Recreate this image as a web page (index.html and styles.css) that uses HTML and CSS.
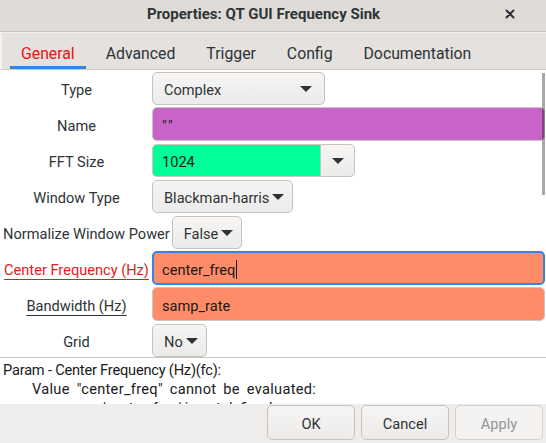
FILE: index.html
```html
<!DOCTYPE html>
<html>
<head>
<meta charset="utf-8">
<link rel="stylesheet" href="styles.css">
</head>
<body>
<div class="window">
  <div class="titlebar">
    <span class="title">Properties: QT GUI Frequency Sink</span>
    <span class="close">
      <svg width="10" height="10" viewBox="0 0 10 10"><path d="M1.5 1.5 L8.5 8.5 M8.5 1.5 L1.5 8.5" stroke="#2e3436" stroke-width="2" stroke-linecap="round"/></svg>
    </span>
  </div>
  <div class="tabbar">
    <div class="tab active">General</div>
    <div class="tab">Advanced</div>
    <div class="tab">Trigger</div>
    <div class="tab">Config</div>
    <div class="tab">Documentation</div>
  </div>
  <div class="content">
    <div class="row">
      <div class="label">Type</div>
      <div class="combo w-type"><span class="t">Complex</span><i class="arrow"></i></div>
    </div>
    <div class="row">
      <div class="label">Name</div>
      <div class="entry purple"><span class="t q">""</span></div>
    </div>
    <div class="row">
      <div class="label">FFT Size</div>
      <div class="entry-combo">
        <div class="entry green"><span class="t">1024</span></div>
        <div class="combo-btn"><i class="arrow"></i></div>
      </div>
    </div>
    <div class="row">
      <div class="label">Window Type</div>
      <div class="combo tight"><span class="t">Blackman-harris</span><i class="arrow"></i></div>
    </div>
    <div class="row">
      <div class="label">Normalize Window Power</div>
      <div class="combo tight"><span class="t">False</span><i class="arrow"></i></div>
    </div>
    <div class="row">
      <div class="label err">Center Frequency (Hz)</div>
      <div class="entry orange focus"><span class="t">center_freq</span><span class="caret"></span></div>
    </div>
    <div class="row">
      <div class="label"><span class="ul">Bandwidth (Hz)</span></div>
      <div class="entry orange"><span class="t">samp_rate</span></div>
    </div>
    <div class="row">
      <div class="label">Grid</div>
      <div class="combo tight"><span class="t">No</span><i class="arrow"></i></div>
    </div>
    <div class="scrollbar"></div>
  </div>
  <div class="messages">
    <div class="msg l1">Param - Center Frequency (Hz)(fc):</div>
    <div class="msg ind1">Value "center_freq" cannot be evaluated:</div>
    <div class="msg ind2">name 'center_freq' is not defined</div>
  </div>
  <div class="buttons">
    <div class="btn">OK</div>
    <div class="btn">Cancel</div>
    <div class="btn disabled">Apply</div>
  </div>
</div>
</body>
</html>
```

FILE: styles.css
```css
* { box-sizing: border-box; }
html, body {
  margin: 0;
  padding: 0;
  width: 546px;
  height: 443px;
  overflow: hidden;
  background: #ffffff;
}
body {
  font-family: Roboto, "Noto Sans", sans-serif;
  font-size: 14.6px;
  color: #2e3436;
}
.window {
  width: 546px;
  height: 443px;
  display: flex;
  flex-direction: column;
}
.titlebar {
  height: 32px;
  flex: none;
  background: #dfdcd8;
  border-bottom: 1px solid #c9c5c0;
  position: relative;
  display: flex;
  align-items: center;
  justify-content: center;
  padding-bottom: 3px;
}
.title {
  font-weight: bold;
  font-size: 15px;
  color: #2e3436;
  margin-left: -19px;
}
.close {
  position: absolute;
  right: 31px;
  top: 9px;
  width: 10px;
  height: 10px;
  display: flex;
}
.tabbar {
  height: 38px;
  flex: none;
  background: #e4e1de;
  border-top: 1px solid #f2f1f0;
  border-left: 2px solid #f2f1f0;
  border-bottom: 1px solid #cdc9c5;
  display: flex;
  align-items: stretch;
  padding-left: 8px;
}
.tab {
  padding: 4px 11px 0 11px;
  display: flex;
  align-items: center;
  margin-right: 9px;
  font-size: 15.8px;
  color: #2e3436;
}
.tab.active {
  color: #ee1010;
  border-bottom: 3px solid #3584e4;
  padding-top: 7px;
}
.content {
  height: 288px;
  flex: none;
  background: #ffffff;
  border-bottom: 1px solid #c9c5c0;
  padding-top: 1px;
  display: flex;
  flex-direction: column;
  gap: 2px;
  position: relative;
  overflow: hidden;
}
.row {
  height: 34px;
  flex: none;
  display: flex;
  align-items: stretch;
}
.label {
  min-width: 150px;
  padding: 4px 0 0 3px;
  display: flex;
  align-items: center;
  justify-content: center;
  white-space: nowrap;
  margin-right: 2px;
}
.t {
  display: block;
  padding-top: 3px;
  white-space: nowrap;
}
.q { letter-spacing: 2px; }
.label.err {
  color: #e01b1b;
  text-decoration: underline;
  text-decoration-color: #e01b1b;
  text-underline-offset: 4px;
}
.ul {
  text-decoration: underline;
  text-underline-offset: 4px;
}
.combo {
  display: flex;
  align-items: center;
  border: 1px solid #c6c2bd;
  border-radius: 5px;
  background: linear-gradient(#f6f5f4, #edebe9);
  padding: 0 8px 0 11px;
  margin-top: 1px;
  height: 33px;
}
.combo.w-type {
  width: 173px;
  justify-content: space-between;
  padding-right: 12px;
}
.combo.tight .t { margin-right: 3px; }
.arrow {
  display: inline-block;
  width: 0;
  height: 0;
  border-left: 6px solid transparent;
  border-right: 6px solid transparent;
  border-top: 6px solid #2e3436;
}
.entry {
  flex: 1;
  margin-right: 1px;
  border: 1px solid #cdc7c2;
  border-radius: 5px;
  display: flex;
  align-items: center;
  padding-left: 9px;
  color: #1a1a1a;
}
.purple { background: #c864c8; }
.green { background: #00ff99; }
.orange { background: #ff8c69; }
.focus {
  border: 2px solid #3584e4;
  padding-left: 8px;
}
.caret {
  display: inline-block;
  width: 1px;
  height: 19px;
  background: #1a1a1a;
  margin: 3px 0 0 1px;
}
.entry-combo {
  display: flex;
  margin-top: 1px;
  height: 33px;
}
.entry-combo .entry {
  flex: none;
  width: 168px;
  margin: 0;
  border-radius: 5px 0 0 5px;
  border-right: none;
}
.combo-btn {
  width: 35px;
  border: 1px solid #c6c2bd;
  border-radius: 0 5px 5px 0;
  background: linear-gradient(#f6f5f4, #edebe9);
  display: flex;
  align-items: center;
  justify-content: center;
}
.scrollbar {
  position: absolute;
  right: 1px;
  top: 3px;
  width: 3px;
  height: 122px;
  background: rgba(0, 0, 0, 0.34);
}
.messages {
  height: 46px;
  flex: none;
  background: #ffffff;
  overflow: hidden;
  padding: 3px 0 0 3px;
  line-height: 19px;
  color: #1a1a1a;
}
.msg { white-space: nowrap; }
.l1 { letter-spacing: -0.2px; }
.ind1 { padding-left: 29px; letter-spacing: 0.3px; word-spacing: 3px; }
.ind2 { padding-left: 60px; }
.buttons {
  flex: 1;
  background: #efedeb;
  display: flex;
  justify-content: flex-end;
  align-items: flex-start;
  gap: 6px;
  padding: 1px 3px 0 0;
}
.btn {
  width: 88px;
  height: 35px;
  border: 1px solid #c6c2bd;
  border-radius: 5px;
  background: linear-gradient(#f6f5f4, #edebe9);
  display: flex;
  align-items: center;
  justify-content: center;
  padding-top: 3px;
  color: #2e3436;
}
.btn.disabled {
  color: #929595;
  background: #f3f2f1;
  border-color: #d5d1cd;
}
```
